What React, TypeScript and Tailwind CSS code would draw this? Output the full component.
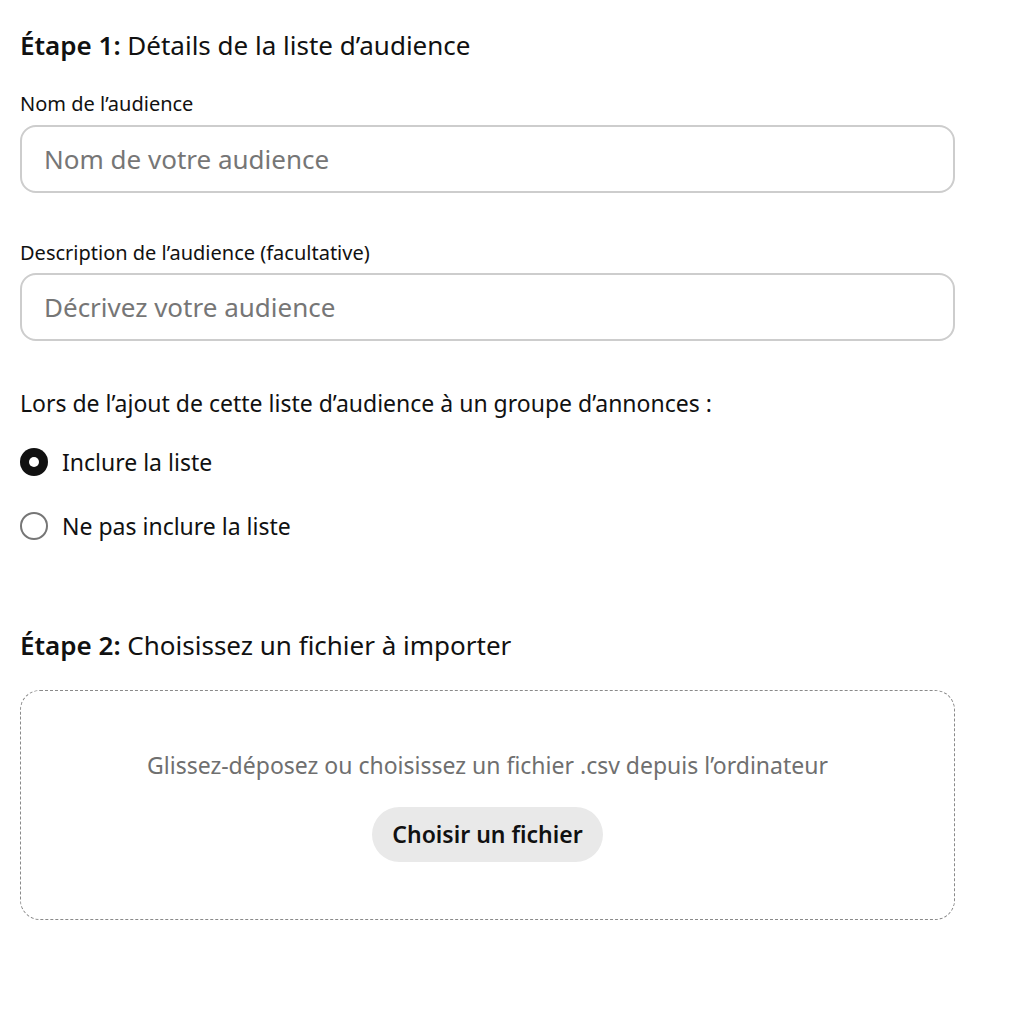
import React, { useState } from "react";

const font = { fontFamily: '"Noto Sans", "Open Sans", sans-serif' };

const App: React.FC = () => {
  const [include, setInclude] = useState(true);

  return (
    <div className="min-h-screen bg-white text-[#111111] pl-5 pr-[57px] pt-[28px]" style={font}>
      <h2 className="text-[26px] leading-[34px]">
        <span className="font-semibold">Étape 1:</span> Détails de la liste d’audience
      </h2>

      <label className="mt-[29px] block text-[20px] leading-[26px]">Nom de l’audience</label>
      <input
        className="mt-[8px] block h-[68px] w-full rounded-[16px] border-2 border-[#cdcdcd] px-[22px] text-[26px] outline-none placeholder:text-[#767676]"
        placeholder="Nom de votre audience"
      />

      <label className="mt-[47px] block text-[20px] leading-[26px]">Description de l’audience (facultative)</label>
      <input
        className="mt-[7px] block h-[68px] w-full rounded-[16px] border-2 border-[#cdcdcd] px-[22px] text-[26px] outline-none placeholder:text-[#767676]"
        placeholder="Décrivez votre audience"
      />

      <p className="mt-[46px] text-[23px] leading-[32px]">
        Lors de l’ajout de cette liste d’audience à un groupe d’annonces :
      </p>

      <div className="mt-[27px] flex flex-col gap-[32px]">
        {[
          { v: true, t: "Inclure la liste" },
          { v: false, t: "Ne pas inclure la liste" },
        ].map((o) => (
          <button
            key={o.t}
            onClick={() => setInclude(o.v)}
            className="flex h-[32px] items-center gap-[14px] text-left"
          >
            {include === o.v ? (
              <span className="flex h-[28px] w-[28px] items-center justify-center rounded-full bg-[#111111]">
                <span className="h-[10px] w-[10px] rounded-full bg-white" />
              </span>
            ) : (
              <span className="h-[28px] w-[28px] rounded-full border-2 border-[#767676]" />
            )}
            <span className="text-[23px] leading-[32px]">{o.t}</span>
          </button>
        ))}
      </div>

      <h2 className="mt-[86px] text-[26px] leading-[34px]">
        <span className="font-semibold">Étape 2:</span> Choisissez un fichier à importer
      </h2>

      <div className="mt-[28px] flex h-[230px] w-full flex-col items-center rounded-[20px] border border-dashed border-[#8a8a8a] pt-[59px]">
        <p className="text-[23px] leading-[30px] text-[#6f6f6f]">
          Glissez-déposez ou choisissez un fichier .csv depuis l’ordinateur
        </p>
        <button className="mt-[27px] h-[55px] rounded-full bg-[#e9e9e9] px-[20px] text-[23px] font-semibold">
          Choisir un fichier
        </button>
      </div>
    </div>
  );
};

export default App;
